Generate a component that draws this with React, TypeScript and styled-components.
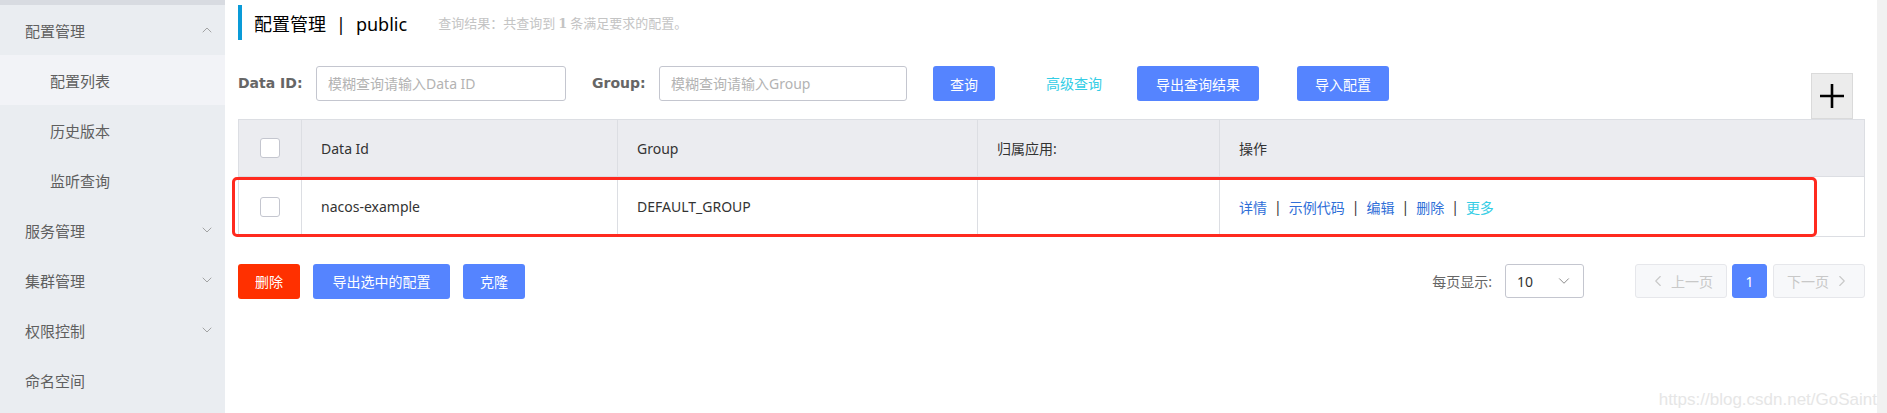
import React from "react";
import styled, { createGlobalStyle } from "styled-components";
import { ChevronDown, ChevronUp, ChevronLeft, ChevronRight } from "lucide-react";

const GlobalStyle = createGlobalStyle`
  html, body {
    margin: 0;
    padding: 0;
    background: #fff;
  }
  * {
    box-sizing: border-box;
  }
  body {
    font-family: "Noto Sans", "Noto Sans CJK SC", sans-serif;
    color: #333;
  }
`;

const Page = styled.div`
  position: relative;
  display: flex;
  height: 413px;
  width: 1887px;
  overflow: hidden;
`;

const Sidebar = styled.div`
  width: 225px;
  flex-shrink: 0;
  background: #eaedf1;
  display: flex;
  flex-direction: column;
  padding-top: 5px;
  box-shadow: inset 0 5px 0 #d8dbe1;
`;

const MenuItem = styled.div<{ $sub?: boolean; $active?: boolean }>`
  height: 50px;
  display: flex;
  align-items: center;
  justify-content: space-between;
  padding: 0 10px 0 ${(p) => (p.$sub ? "50px" : "25px")};
  font-size: 15px;
  color: #5f5f5f;
  background: ${(p) => (p.$active ? "#f2f3f7" : "transparent")};
`;

const Main = styled.div`
  flex: 1;
  display: flex;
  flex-direction: column;
  padding: 0 12px 0 13px;
`;

const Scrollbar = styled.div`
  width: 10px;
  flex-shrink: 0;
  background: #f1f1f1;
`;

const TitleBar = styled.div`
  margin-top: 5px;
  height: 35px;
  border-left: 4px solid #0a9bd8;
  padding-left: 12px;
  display: flex;
  align-items: center;
`;

const Title = styled.span`
  font-size: 18px;
  color: #000;
`;

const TitleSep = styled.span`
  margin: 0 10px;
`;

const Summary = styled.span`
  margin-left: 31px;
  font-size: 13px;
  color: #c4c4c4;

  b {
    font-family: "DejaVu Serif", serif;
    font-weight: bold;
    margin: 0 3px;
  }
`;

const SearchRow = styled.div`
  margin-top: 26px;
  display: flex;
  align-items: flex-start;
  height: 53px;
`;

const Label = styled.label<{ $gap: number; $w: number }>`
  width: ${(p) => p.$w}px;
  height: 35px;
  line-height: 35px;
  font-family: "DejaVu Sans", sans-serif;
  font-weight: bold;
  font-size: 14px;
  color: #666;
  white-space: nowrap;
  margin-left: ${(p) => p.$gap}px;
  margin-right: 16px;
`;

const Input = styled.input<{ $w: number }>`
  width: ${(p) => p.$w}px;
  height: 35px;
  border: 1px solid #c4c6cf;
  border-radius: 3px;
  padding: 0 11px;
  font-family: inherit;
  font-size: 14px;
  color: #333;
  outline: none;

  &::placeholder {
    color: #b3b3b3;
  }
`;

const Button = styled.button<{ $gap?: number; $w: number; $danger?: boolean }>`
  height: 35px;
  width: ${(p) => p.$w}px;
  margin-left: ${(p) => p.$gap ?? 0}px;
  border: 0;
  border-radius: 3px;
  background: ${(p) => (p.$danger ? "#ff3000" : "#5584ff")};
  color: #fff;
  font-family: inherit;
  font-size: 14px;
  padding: 0;
  cursor: pointer;
`;

const TextLink = styled.span<{ $gap: number }>`
  width: 59px;
  height: 35px;
  line-height: 35px;
  margin-left: ${(p) => p.$gap}px;
  color: #33cde5;
  font-size: 14px;
  white-space: nowrap;
`;

const AddBox = styled.div`
  margin-left: auto;
  margin-top: 7px;
  margin-right: 12px;
  width: 42px;
  height: 46px;
  background: #ececec;
  border: 1px solid #dadada;
  display: flex;
  align-items: center;
  justify-content: center;
`;

const TableWrap = styled.div`
  position: relative;
`;

const Table = styled.table`
  width: 100%;
  border-collapse: collapse;
  table-layout: fixed;
  font-size: 14px;

  th, td {
    border: 1px solid #dcdee3;
    padding: 0 19px;
    text-align: left;
    font-weight: normal;
    color: #333;
  }

  th {
    height: 57px;
    background: #ebecf0;
  }

  td {
    height: 60px;
    background: #fff;
  }
`;

const CheckCell = styled.col`
  width: 63px;
`;

const CheckBox = styled.span`
  display: block;
  width: 20px;
  height: 20px;
  margin: 0 auto;
  border: 1px solid #c4c6cf;
  border-radius: 3px;
  background: #fff;
`;

const Highlight = styled.div`
  position: absolute;
  left: -6px;
  top: 58px;
  width: 1585px;
  height: 60px;
  border: 3px solid #ff2a1f;
  border-radius: 5px;
  pointer-events: none;
`;

const Actions = styled.div`
  display: flex;
  gap: 7px;
  align-items: center;
`;

const ActionLink = styled.a<{ $more?: boolean }>`
  color: ${(p) => (p.$more ? "#33cde5" : "#2f6fd8")};
  text-decoration: none;
`;

const Pipe = styled.span`
  color: #333;
`;

const Footer = styled.div`
  margin-top: 27px;
  display: flex;
  align-items: center;
  height: 34px;
`;

const PageSizeLabel = styled.span`
  margin-left: auto;
  font-size: 14px;
  color: #666;
`;

const Select = styled.div`
  margin-left: 13px;
  width: 79px;
  height: 34px;
  border: 1px solid #c4c6cf;
  border-radius: 3px;
  display: flex;
  align-items: center;
  justify-content: space-between;
  padding: 0 10px 0 11px;
  font-size: 14px;
  color: #333;
`;

const PageButton = styled.div<{ $gap: number; $w: number; $active?: boolean }>`
  margin-left: ${(p) => p.$gap}px;
  width: ${(p) => p.$w}px;
  height: 34px;
  border-radius: 3px;
  display: flex;
  align-items: center;
  justify-content: center;
  gap: 4px;
  font-size: 14px;
  background: ${(p) => (p.$active ? "#5584ff" : "#f7f8fa")};
  border: 1px solid ${(p) => (p.$active ? "#5584ff" : "#e6e7eb")};
  color: ${(p) => (p.$active ? "#fff" : "#c8c8c8")};
`;

const Watermark = styled.div`
  position: absolute;
  right: 10px;
  bottom: 3px;
  font-family: "Liberation Sans", Arial, sans-serif;
  font-size: 17px;
  color: #e6e6e6;
`;

const menu = [
  { label: "配置管理", open: true },
  { label: "配置列表", sub: true, active: true },
  { label: "历史版本", sub: true },
  { label: "监听查询", sub: true },
  { label: "服务管理", open: false },
  { label: "集群管理", open: false },
  { label: "权限控制", open: false },
  { label: "命名空间" },
];

export default function App() {
  return (
    <Page>
      <GlobalStyle />
      <Sidebar>
        {menu.map((m) => (
          <MenuItem key={m.label} $sub={m.sub} $active={m.active}>
            <span>{m.label}</span>
            {m.open === true && <ChevronUp size={16} strokeWidth={1.1} color="#888" />}
            {m.open === false && <ChevronDown size={16} strokeWidth={1.1} color="#888" />}
          </MenuItem>
        ))}
      </Sidebar>
      <Main>
        <TitleBar>
          <Title>
            配置管理<TitleSep>|</TitleSep>public
          </Title>
          <Summary>
            查询结果：共查询到<b>1</b>条满足要求的配置。
          </Summary>
        </TitleBar>
        <SearchRow>
          <Label $gap={0} $w={62}>Data ID:</Label>
          <Input $w={250} placeholder="模糊查询请输入Data ID" />
          <Label $gap={26} $w={51}>Group:</Label>
          <Input $w={248} placeholder="模糊查询请输入Group" />
          <Button $gap={26} $w={62}>查询</Button>
          <TextLink $gap={51}>高级查询</TextLink>
          <Button $gap={32} $w={122}>导出查询结果</Button>
          <Button $gap={38} $w={92}>导入配置</Button>
          <AddBox>
            <svg width="26" height="26" viewBox="0 0 26 26">
              <path d="M13 1v24M1 13h24" stroke="#000" strokeWidth="2.6" />
            </svg>
          </AddBox>
        </SearchRow>
        <TableWrap>
          <Table>
            <colgroup>
              <CheckCell />
              <col style={{ width: 316 }} />
              <col style={{ width: 360 }} />
              <col style={{ width: 242 }} />
              <col />
            </colgroup>
            <thead>
              <tr>
                <th><CheckBox /></th>
                <th>Data Id</th>
                <th>Group</th>
                <th>归属应用:</th>
                <th>操作</th>
              </tr>
            </thead>
            <tbody>
              <tr>
                <td><CheckBox /></td>
                <td>nacos-example</td>
                <td>DEFAULT_GROUP</td>
                <td></td>
                <td>
                  <Actions>
                    <ActionLink>详情</ActionLink>
                    <Pipe>|</Pipe>
                    <ActionLink>示例代码</ActionLink>
                    <Pipe>|</Pipe>
                    <ActionLink>编辑</ActionLink>
                    <Pipe>|</Pipe>
                    <ActionLink>删除</ActionLink>
                    <Pipe>|</Pipe>
                    <ActionLink $more>更多</ActionLink>
                  </Actions>
                </td>
              </tr>
            </tbody>
          </Table>
          <Highlight />
        </TableWrap>
        <Footer>
          <Button $w={62} $danger>删除</Button>
          <Button $gap={13} $w={137}>导出选中的配置</Button>
          <Button $gap={13} $w={62}>克隆</Button>
          <PageSizeLabel>每页显示:</PageSizeLabel>
          <Select>
            <span>10</span>
            <ChevronDown size={18} strokeWidth={1.3} color="#888" />
          </Select>
          <PageButton $gap={51} $w={92}>
            <ChevronLeft size={18} strokeWidth={1.5} />
            上一页
          </PageButton>
          <PageButton $gap={5} $w={35} $active>1</PageButton>
          <PageButton $gap={6} $w={92}>
            下一页
            <ChevronRight size={18} strokeWidth={1.5} />
          </PageButton>
        </Footer>
      </Main>
      <Scrollbar />
      <Watermark>https://blog.csdn.net/GoSaint</Watermark>
    </Page>
  );
}
